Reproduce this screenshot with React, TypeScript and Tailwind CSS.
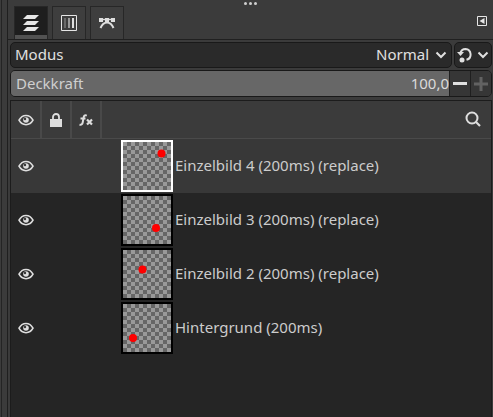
import type { ReactNode } from "react";

type Layer = {
  name: string;
  cx: number;
  cy: number;
  active?: boolean;
};

const layers: Layer[] = [
  { name: "Einzelbild 4 (200ms) (replace)", cx: 38.5, cy: 11.5, active: true },
  { name: "Einzelbild 3 (200ms) (replace)", cx: 33, cy: 32 },
  { name: "Einzelbild 2 (200ms) (replace)", cx: 19.5, cy: 19.5 },
  { name: "Hintergrund (200ms)", cx: 10, cy: 34 },
];

function EyeIcon() {
  return (
    <svg width="16" height="12" viewBox="0 0 16 12" fill="none">
      <path d="M1 6.2C4.3-.1 11.7-.1 15 6.2 11.7 12.2 4.3 12.2 1 6.2Z" stroke="#dedede" strokeWidth="1.6" />
      <circle cx="8" cy="6" r="2.8" fill="#dedede" />
      <circle cx="7" cy="5" r="1.2" fill="#3a3a3a" />
    </svg>
  );
}

function LayersIcon() {
  return (
    <svg width="16" height="16" viewBox="0 0 16 16" fill="#e6e6e6">
      <path d="M4 0h12l-4 4H0zM4 6h12l-4 4H0zM4 12h12l-4 4H0z" />
    </svg>
  );
}

function ChannelsIcon() {
  return (
    <svg width="16" height="16" viewBox="0 0 16 16" fill="none">
      <path d="M.5.5h15v15H.5z" stroke="#e6e6e6" />
      <path d="M3 3h2v10H3z" fill="#6a6a6a" />
      <path d="M7 3h2v10H7z" fill="#9a9a9a" />
      <path d="M11 3h2v10h-2z" fill="#dedede" />
    </svg>
  );
}

function PathsIcon() {
  return (
    <svg width="16" height="12" viewBox="0 0 16 12" fill="none">
      <path d="M2 2.5h12" stroke="#dedede" strokeWidth="1.4" />
      <path d="M0 1h4v4H0zM12 1h4v4h-4zM6 1h4v4H6z" fill="#dedede" />
      <path d="M1.5 11C3 7.5 5 5.5 8 5.5s5 2 6.5 5.5" stroke="#dedede" strokeWidth="2" />
    </svg>
  );
}

function Chevron() {
  return (
    <svg width="12" height="8" viewBox="0 0 12 8" fill="none">
      <path d="M1.5 1.5 6 6l4.5-4.5" stroke="#e0e0e0" strokeWidth="2" />
    </svg>
  );
}

function Tab({ label, active, children }: { label: string; active?: boolean; children: ReactNode }) {
  return (
    <button
      type="button"
      role="tab"
      aria-label={label}
      aria-selected={!!active}
      className={`flex w-[34px] items-center justify-center border border-b-0 border-[#272727] ${
        active ? "bg-[#1e1e1e] shadow-[inset_0_-4px_0_#525252]" : "bg-[#3e3e3e]"
      }`}
    >
      {children}
    </button>
  );
}

function Thumbnail({ cx, cy, active }: Omit<Layer, "name">) {
  return (
    <div
      className={`size-[52px] border-2 bg-[repeating-conic-gradient(#666_0_25%,#999_0_50%)] bg-[length:8px_8px] bg-origin-padding ${
        active ? "border-white" : "border-black"
      }`}
    >
      <svg width="48" height="48" viewBox="0 0 48 48">
        <circle cx={cx} cy={cy} r="4" fill="#f00" />
      </svg>
    </div>
  );
}

export default function App() {
  return (
    <div className="flex min-h-screen bg-[#3b3b3b] font-['Noto_Sans','Open_Sans',sans-serif] text-[15px] leading-5 text-[#e0e0e0]">
      <div className="w-2 shrink-0 border-r border-[#1f1f1f] pl-px">
        <div className="h-full border-l border-[#242424]" />
      </div>
      <main className="flex min-w-0 flex-1 flex-col">
        <div className="flex h-1.5 items-center justify-center gap-0.5">
          <span className="size-[3px] rounded-full bg-[#cfcfcf]" />
          <span className="size-[3px] rounded-full bg-[#cfcfcf]" />
          <span className="size-[3px] rounded-full bg-[#cfcfcf]" />
        </div>
        <div className="flex h-[34px] border-b border-[#202020] px-1.5">
          <div role="tablist" className="flex flex-1 gap-1">
            <Tab label="Ebenen" active>
              <LayersIcon />
            </Tab>
            <Tab label="Kanäle">
              <ChannelsIcon />
            </Tab>
            <Tab label="Pfade">
              <PathsIcon />
            </Tab>
          </div>
          <button type="button" aria-label="Reitermenü" className="pb-1">
            <svg width="10" height="10" viewBox="0 0 10 10" fill="none">
              <path d="M.5.5h9v9h-9z" stroke="#e6e6e6" />
              <path d="M7.5 2v6L2.5 5z" fill="#e6e6e6" />
            </svg>
          </button>
        </div>

        <div className="mt-0.5 flex h-[26px] gap-0.5 pr-px pl-0.5">
          <button
            type="button"
            className="flex flex-1 items-center rounded-[5px] border border-[#191919] bg-[#2a2a2a] pr-1 pl-1"
          >
            <span className="flex-1 pb-0.5 text-left">Modus</span>
            <span className="mr-1.5 pb-0.5">Normal</span>
            <Chevron />
          </button>
          <button
            type="button"
            aria-label="Modusgruppe"
            className="flex w-[38px] items-center justify-center gap-1 rounded-[5px] border border-[#191919] bg-[#2a2a2a]"
          >
            <svg width="16" height="16" viewBox="0 0 16 16" fill="none">
              <path d="M3 6.5C4 3.5 6 2 8.5 2a5.5 5.5 0 0 1 1 10.8" stroke="#e0e0e0" strokeWidth="2" />
              <path d="M0 5h7L3.5 9z" fill="#e0e0e0" />
              <circle cx="5" cy="13" r="2.5" fill="#e0e0e0" />
            </svg>
            <Chevron />
          </button>
        </div>

        <div className="mt-0.5 mr-px ml-0.5 flex h-[27px] overflow-hidden rounded-[5px] border border-[#191919]">
          <label htmlFor="opacity" className="flex items-center bg-[#676767] pb-0.5 pl-[5px] text-[#cfcfcf]">
            Deckkraft
          </label>
          <input
            id="opacity"
            type="text"
            defaultValue="100,0"
            className="min-w-0 flex-1 bg-[#676767] pb-0.5 text-right text-[#dadada] outline-none"
          />
          <button
            type="button"
            aria-label="Verringern"
            className="flex w-[21px] items-center justify-center border-l border-[#1f1f1f] bg-[#363636]"
          >
            <span className="h-[3px] w-3.5 bg-[#e0e0e0]" />
          </button>
          <button
            type="button"
            aria-label="Erhöhen"
            className="flex w-[21px] items-center justify-center border-l border-[#1f1f1f] bg-[#363636]"
          >
            <svg width="14" height="14" viewBox="0 0 14 14">
              <path d="M0 7h14M7 0v14" stroke="#626262" strokeWidth="3" />
            </svg>
          </button>
        </div>

        <section className="mt-[3px] mr-px ml-0.5 flex flex-1 flex-col border-x border-t border-[#1c1c1c] bg-[#252525]">
          <div className="flex h-[38px] border-b border-[#4a4a4a] bg-[#3b3b3b]">
            <div className="flex w-[31px] items-center justify-center border-r-2 border-[#494949]">
              <EyeIcon />
            </div>
            <div className="flex w-[30px] items-center justify-center border-r-2 border-[#494949]">
              <svg width="12" height="14" viewBox="0 0 12 14" fill="none">
                <path d="M3 6V4a3 3 0 0 1 6 0v2" stroke="#dedede" strokeWidth="1.8" />
                <path d="M0 6h12v8H0z" fill="#dedede" />
              </svg>
            </div>
            <div className="flex w-[30px] items-center justify-center border-r-2 border-[#494949]">
              <svg width="14" height="12" viewBox="0 0 14 12" fill="none" stroke="#dedede">
                <path d="M7.8 1.6C5.8.8 4.8 1.6 4.5 4L3.8 8C3.5 10.200 2.500 11.200.5 10.600M1.500 4.500h5" strokeWidth="2" />
                <path d="m8 5.500 5 5M13 5.500l-5 5" strokeWidth="2.200" />
              </svg>
            </div>
            <button type="button" aria-label="Suchen" className="ml-auto flex items-center pr-2.5 pb-0.5">
              <svg width="16" height="16" viewBox="0 0 16 16" fill="none" stroke="#dedede">
                <circle cx="7" cy="7" r="5.5" strokeWidth="2" />
                <path d="m11 11 4 4" strokeWidth="2.2" />
              </svg>
            </button>
          </div>
          <ul>
            {layers.map((layer) => (
              <li
                key={layer.name}
                className={`flex h-[54px] items-center ${layer.active ? "bg-[#383838]" : ""}`}
              >
                <button
                  type="button"
                  aria-label={`${layer.name} sichtbar`}
                  className="mr-20 flex w-[30px] justify-center"
                >
                  <EyeIcon />
                </button>
                <Thumbnail cx={layer.cx} cy={layer.cy} active={layer.active} />
                <span className="ml-0.5 pb-0.5 whitespace-nowrap text-[#cccccc]">{layer.name}</span>
              </li>
            ))}
          </ul>
        </section>
      </main>
    </div>
  );
}
